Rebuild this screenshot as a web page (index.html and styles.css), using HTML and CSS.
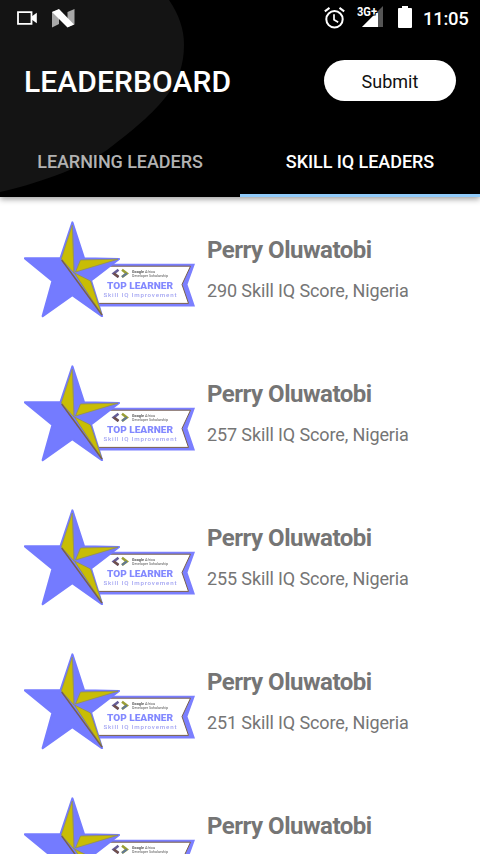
FILE: index.html
```
<!DOCTYPE html>
<html lang="en">
<head>
<meta charset="utf-8">
<title>Leaderboard</title>
<link rel="stylesheet" href="styles.css">
</head>
<body>
<svg width="0" height="0" class="defs">
  <symbol id="badge" viewBox="0 0 172 97">
    <path d="M65 42.7H171L163.5 63.5L171 85.4H65Z" fill="#7b7fff"/>
    <path d="M60 45.2H166.5L158 63.5L164.5 82.4H60Z" fill="#fff" stroke="#79604b" stroke-width="1"/>
    <path d="M48.4 1.5L60 37.3L95 38L67 59.5L78 95L48.3 74L18.7 95L28.5 60L1 37.3L36.5 37.3Z" fill="#747bff" stroke="#747bff" stroke-width="2.2" stroke-linejoin="round"/>
    <path d="M48.3 4L37.3 38L50 52Z" fill="#c8bd05" stroke="#929052" stroke-width=".6"/>
    <path d="M51.5 51L56.5 39L94 38.2Z" fill="#c8bd05" stroke="#929052" stroke-width=".8"/>
    <path d="M50.5 52L66.5 60L78 94Z" fill="#c8bd05" stroke="#929052" stroke-width=".8"/>
    <path d="M37.7 39L78 94" fill="none" stroke="#79604b" stroke-width="1.4"/>
    <path d="M50 52L48.5 7" fill="none" stroke="#92906b" stroke-width=".8"/>
    <path d="M94.5 48.8L89.7 52.4L94.5 56" fill="none" stroke="#665e98" stroke-width="2.6"/>
    <path d="M89.7 52.4L94.5 56" fill="none" stroke="#70504a" stroke-width="2.3"/>
    <path d="M98 48.8L102.8 52.4L98 56" fill="none" stroke="#9a9f35" stroke-width="2.6"/>
    <path d="M102.8 52.4L98 56" fill="none" stroke="#60779a" stroke-width="2"/>
    <g font-family="Roboto, sans-serif">
      <text x="108" y="51.5" font-size="3.8" fill="#555" textLength="23" lengthAdjust="spacingAndGlyphs"><tspan font-weight="700">Google</tspan> Africa</text>
      <text x="108" y="56.2" font-size="3.8" fill="#555" textLength="36" lengthAdjust="spacingAndGlyphs">Developer Scholarship</text>
      <text x="83" y="67.5" font-size="8.8" font-weight="900" fill="#8389ff" textLength="66" lengthAdjust="spacingAndGlyphs">TOP LEARNER</text>
      <text x="79.5" y="75.8" font-size="6.2" font-weight="500" fill="#a3a5f2" textLength="73">Skill IQ Improvement</text>
    </g>
  </symbol>
</svg>
<header class="header">
  <svg class="backdrop" width="240" height="197" viewBox="0 0 240 197"><path d="M0 0H169C179 15 184 29 184 45C184 65 178 81 168 94C156 110 140 125 107 150C83 166 48 181 0 192Z" fill="#141414"/></svg>
  <div class="status">
    <svg width="20" height="14" viewBox="0 0 20 14"><path d="M1 1.2H14.5V12.8H1Z" fill="none" stroke="#fff" stroke-width="1.8"/><path d="M15 5.3L19.8 1.7V12.3L15 8.7Z" fill="#fff"/></svg>
    <svg class="n-icon" width="23" height="19" viewBox="0 0 23 19"><path d="M0 3L7 .5V15L0 18.5ZM15.5 3L22.5 0V15.5L15.5 18Z" fill="#a8a8a8"/><path d="M0 3L7 0L22 15.5L15.5 18.5Z" fill="#fff"/></svg>
    <span class="spacer"></span>
    <svg class="alarm" width="21" height="22" viewBox="0 0 21 22" fill="none" stroke="#fff"><circle cx="10.5" cy="12.3" r="8.2" stroke-width="2"/><path d="M.8 4.4L5.5 .9M20.2 4.4L15.5 .9" stroke-width="2"/><path d="M10 7.3V12.8L14.2 15.3" stroke-width="1.7"/></svg>
    <svg class="signal" width="28" height="24" viewBox="0 0 28 24"><path d="M5 22L26 1V22Z" fill="#555"/><path d="M5 22L21 6V22Z" fill="#fff"/><text x="0" y="11" textLength="20" lengthAdjust="spacingAndGlyphs" class="network">3G+</text></svg>
    <svg class="battery" width="14" height="22" viewBox="0 0 14 22"><path d="M4 0H10V2H13Q14 2 14 3V21Q14 22 13 22H1Q0 22 0 21V3Q0 2 1 2H4Z" fill="#fff"/></svg>
    <time>11:05</time>
  </div>
  <div class="titlebar">
    <h1>LEADERBOARD</h1>
    <button class="submit">Submit</button>
  </div>
  <nav class="tabs">
    <a class="tab">LEARNING LEADERS</a>
    <a class="tab active">SKILL IQ LEADERS</a>
  </nav>
</header>
<main class="list">
  <article class="row"><svg class="badge"><use href="#badge"/></svg><div><h2>Perry Oluwatobi</h2><p>290 Skill IQ Score, Nigeria</p></div></article>
  <article class="row"><svg class="badge"><use href="#badge"/></svg><div><h2>Perry Oluwatobi</h2><p>257 Skill IQ Score, Nigeria</p></div></article>
  <article class="row"><svg class="badge"><use href="#badge"/></svg><div><h2>Perry Oluwatobi</h2><p>255 Skill IQ Score, Nigeria</p></div></article>
  <article class="row"><svg class="badge"><use href="#badge"/></svg><div><h2>Perry Oluwatobi</h2><p>251 Skill IQ Score, Nigeria</p></div></article>
  <article class="row"><svg class="badge"><use href="#badge"/></svg><div><h2>Perry Oluwatobi</h2></div></article>
</main>
</body>
</html>
```
FILE: styles.css
```
* { box-sizing: border-box; }
body {
  margin: 0;
  height: 854px;
  display: flex;
  flex-direction: column;
  overflow: hidden;
  background: #fff;
  font-family: Roboto, sans-serif;
}
h1, h2, p { margin: 0; }
svg { display: block; flex: none; }
.defs { position: absolute; }
.header {
  position: relative;
  z-index: 1;
  flex: none;
  height: 197px;
  background: #000;
  color: #fff;
  box-shadow: 0 2px 6px rgba(0, 0, 0, .4);
}
.backdrop { position: absolute; left: 0; top: 0; }
.status, .titlebar, .tabs { position: relative; display: flex; }
.status { height: 36px; align-items: center; padding: 0 11px 0 17px; }
.n-icon { margin-left: 15px; }
.spacer { flex: 1; }
.signal { margin-left: 12px; margin-top: -3px; }
.network { font: 700 12px Roboto, sans-serif; fill: #fff; stroke: #000; stroke-width: 2px; paint-order: stroke; }
.battery { margin-left: 13px; margin-top: -2px; }
.status time { margin-left: 11px; width: 46px; font-size: 18.5px; line-height: 22px; font-weight: 500; letter-spacing: -.3px; margin-top: 2px; white-space: nowrap; }
.titlebar { height: 90px; align-items: center; justify-content: space-between; padding: 0 24px; }
h1 { margin-top: 2px; font-size: 30px; font-weight: 500; line-height: 36px; letter-spacing: .1px; }
.submit {
  width: 132px;
  height: 41px;
  margin-top: -1px;
  padding: 2px 0 0;
  border: 0;
  border-radius: 21px;
  background: #fff;
  color: #111;
  font: 400 18px Roboto, sans-serif;
}
.tabs { height: 71px; }
.tab {
  flex: 1;
  text-align: center;
  font-size: 18px;
  line-height: 71px;
  font-weight: 500;
  letter-spacing: -.06px;
  color: #b2b2b2;
}
.active { color: #fff; border-bottom: 3px solid #90caf9; }
.list { display: flex; flex: 1; min-height: 0; flex-direction: column; overflow: hidden; }
.row { display: flex; flex: none; height: 144px; padding: 24px 24px 0; gap: 11px; }
.badge { width: 172px; height: 97px; filter: blur(.55px); }
h2 { padding-top: 14px; font-size: 24px; line-height: 30px; font-weight: 700; letter-spacing: -.5px; color: #757575; }
p { padding-top: 15px; font-size: 18px; line-height: 22px; letter-spacing: -.12px; color: #757575; }
```
